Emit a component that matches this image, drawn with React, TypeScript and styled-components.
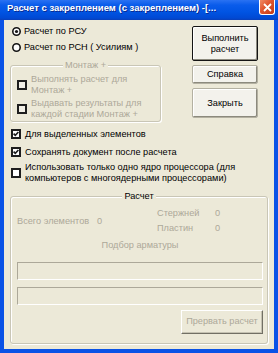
import React from 'react';
import styled, { createGlobalStyle } from 'styled-components';

// XP "Luna" look, scaled down like the screenshot
const ui = {
  face: '#ECE9D8',
  disabled: '#ACA899',
  text: '#000000',
  frame: '#0A52E6',
  etch: '#C9C6B6',
  font: '"Liberation Sans", Arial, sans-serif',
  size: '9.2px',
};

const GlobalStyle = createGlobalStyle`
  html, body {
    margin: 0;
    padding: 0;
    background: ${ui.face};
  }
  body {
    font-family: ${ui.font};
    font-size: ${ui.size};
  }
`;

const Window = styled.div`
  width: 278px;
  height: 353px;
  display: flex;
  flex-direction: column;
  overflow: hidden;
`;

const TitleBar = styled.div`
  height: 20px;
  flex: none;
  display: flex;
  align-items: flex-start;
  padding: 0 3px 0 7px;
  box-sizing: border-box;
  background: linear-gradient(to bottom, #2A72F2 0%, #0A5CEB 25%, #0054E3 60%, #0049D4 90%, #0A3FB8 100%);
`;

const Title = styled.span`
  flex: 1;
  color: #ffffff;
  font-weight: bold;
  font-size: 9.5px;
  line-height: 15px;
  white-space: nowrap;
  overflow: hidden;
  text-shadow: 1px 1px 0 #0A2A90;
`;

const CloseButton = styled.div`
  width: 16px;
  height: 15px;
  flex: none;
  box-sizing: border-box;
  border: 1px solid #ffffff;
  border-top: none;
  border-radius: 0 0 3px 3px;
  background: linear-gradient(135deg, #F08A66 0%, #E0542E 45%, #C43A16 100%);
  display: flex;
  align-items: center;
  justify-content: center;
`;

const Frame = styled.div`
  flex: 1;
  min-height: 0;
  display: flex;
  flex-direction: column;
  box-sizing: border-box;
  border: 4px solid ${ui.frame};
  border-top: none;
  padding: 3px 6px 5px;
  background: ${ui.face};
  color: ${ui.text};
`;

const TopSection = styled.div`
  display: flex;
  justify-content: space-between;
  align-items: flex-start;
`;

const LeftColumn = styled.div`
  width: 151px;
  display: flex;
  flex-direction: column;
`;

const ButtonColumn = styled.div`
  width: 66px;
  margin: 3px 10px 0 0;
  display: flex;
  flex-direction: column;
  gap: 4px;
`;

const RadioRow = styled.label`
  height: 16px;
  display: flex;
  align-items: center;
  gap: 3px;
  padding-left: 2px;
  line-height: 11px;
  white-space: nowrap;
`;

const GroupBox = styled.fieldset<{ $grow?: boolean; $top: number }>`
  margin: ${(p) => p.$top}px 0 0;
  padding: 0;
  min-width: 0;
  border: 1px solid ${ui.etch};
  border-radius: 3px;
  box-shadow: inset 1px 1px 0 #ffffff, 1px 1px 0 #ffffff;
  display: flex;
  flex-direction: column;
  flex: ${(p) => (p.$grow ? 1 : 'none')};
`;

const GroupLegend = styled.legend<{ $disabled?: boolean }>`
  margin: 0 auto;
  padding: 0 2px;
  font-size: ${ui.size};
  line-height: 10px;
  background: ${ui.face};
  color: ${(p) => (p.$disabled ? ui.disabled : ui.text)};
`;

const MountBody = styled.div`
  display: flex;
  flex-direction: column;
  gap: 3px;
  padding: 4px 4px 2px 6px;
`;

const CheckRow = styled.label<{ $disabled?: boolean }>`
  display: flex;
  align-items: center;
  gap: 4px;
  min-height: 16px;
  line-height: 10.5px;
  white-space: nowrap;
  color: ${(p) => (p.$disabled ? ui.disabled : ui.text)};
`;

const OptionList = styled.div`
  display: flex;
  flex-direction: column;
  gap: 2px;
  margin-top: 4px;
  padding-left: 1px;
`;

const BoxMark = styled.span<{ $disabled?: boolean }>`
  width: 10px;
  height: 10px;
  flex: none;
  box-sizing: border-box;
  border: 2px solid #1E1E1E;
  background: ${(p) => (p.$disabled ? '#F1EFE6' : '#ffffff')};
  display: flex;
  align-items: center;
  justify-content: center;
`;

const PushButton = styled.button<{ $height: number; $default?: boolean }>`
  height: ${(p) => p.$height}px;
  width: 100%;
  padding: 0;
  font-family: ${ui.font};
  font-size: ${ui.size};
  line-height: 11px;
  color: ${(p) => (p.disabled ? ui.disabled : ui.text)};
  background: #F3F2EC;
  border: 1px solid ${(p) => (p.$default ? '#141414' : '#B4B1A2')};
  border-radius: 2px;
  box-shadow: inset -1px -1px 0 #8C8A7E, inset 1px 1px 0 #ffffff;
  cursor: default;
`;

const CalcBody = styled.div`
  flex: 1;
  display: flex;
  flex-direction: column;
  padding: 5px 4px 0 6px;
`;

const StatsGrid = styled.div`
  display: grid;
  grid-template-columns: 80px 60px 58px 1fr;
  grid-template-rows: 15px 15px;
  align-items: center;
  color: ${ui.disabled};
  line-height: 11px;
`;

const StatCell = styled.span<{ $span?: boolean }>`
  grid-row: ${(p) => (p.$span ? '1 / span 2' : 'auto')};
  white-space: nowrap;
`;

const Caption = styled.div`
  margin-top: 4px;
  text-align: center;
  line-height: 10.5px;
  color: ${ui.disabled};
`;

const ProgressBox = styled.div<{ $top: number }>`
  height: 18px;
  margin-top: ${(p) => p.$top}px;
  box-sizing: border-box;
  border: 1px solid;
  border-color: ${ui.disabled} #ffffff #ffffff ${ui.disabled};
`;

const StopRow = styled.div`
  margin-top: 5px;
  display: flex;
  justify-content: flex-end;
`;

const StopButton = styled(PushButton)`
  width: 82px;
  background: ${ui.face};
  border-color: #ffffff #716F64 #716F64 #ffffff;
  box-shadow: inset -1px -1px 0 #C5C2B2;
  border-radius: 0;
`;

const Radio = ({ checked }: { checked?: boolean }) => (
  <svg width="9" height="9" viewBox="0 0 9 9" style={{ flex: 'none' }}>
    <circle cx="4.5" cy="4.5" r="3.7" fill="#ffffff" stroke="#151515" strokeWidth="1.6" />
    {checked && <circle cx="4.5" cy="4.5" r="1.6" fill="#151515" />}
  </svg>
);

const CheckBox = ({ checked, disabled }: { checked?: boolean; disabled?: boolean }) => (
  <BoxMark $disabled={disabled}>
    {checked && (
      <svg width="6" height="6" viewBox="0 0 6 6">
        <path d="M0.6 2.6 L2.3 4.4 L5.4 1" fill="none" stroke="#1E1E1E" strokeWidth="1.6" />
      </svg>
    )}
  </BoxMark>
);

const App = () => {
  return (
    <>
      <GlobalStyle />
      <Window>
        <TitleBar>
          <Title>Расчет с закреплением (с закреплением) -[...</Title>
          <CloseButton>
            <svg width="9" height="9" viewBox="0 0 9 9">
              <path d="M1 1 L8 8 M8 1 L1 8" stroke="#ffffff" strokeWidth="1.8" />
            </svg>
          </CloseButton>
        </TitleBar>

        <Frame>
          <TopSection>
            <LeftColumn>
              <RadioRow>
                <Radio checked />
                Расчет по РСУ
              </RadioRow>
              <RadioRow>
                <Radio />
                Расчет по РСН ( Усилиям )
              </RadioRow>

              <GroupBox $top={5}>
                <GroupLegend $disabled>Монтаж +</GroupLegend>
                <MountBody>
                  <CheckRow $disabled>
                    <CheckBox disabled />
                    <span>
                      Выполнять расчет для
                      <br />
                      Монтаж +
                    </span>
                  </CheckRow>
                  <CheckRow $disabled>
                    <CheckBox disabled />
                    <span>
                      Выдавать результаты для
                      <br />
                      каждой стадии Монтаж +
                    </span>
                  </CheckRow>
                </MountBody>
              </GroupBox>
            </LeftColumn>

            <ButtonColumn>
              <PushButton $height={35} $default>
                Выполнить
                <br />
                расчет
              </PushButton>
              <PushButton $height={19}>Справка</PushButton>
              <PushButton $height={30}>Закрыть</PushButton>
            </ButtonColumn>
          </TopSection>

          <OptionList>
            <CheckRow>
              <CheckBox checked />
              Для выделенных элементов
            </CheckRow>
            <CheckRow>
              <CheckBox checked />
              Сохранять документ после расчета
            </CheckRow>
            <CheckRow>
              <CheckBox />
              <span>
                Использовать только одно ядро процессора (для
                <br />
                компьютеров с многоядерными процессорами)
              </span>
            </CheckRow>
          </OptionList>

          <GroupBox $top={8} $grow>
            <GroupLegend>Расчет</GroupLegend>
            <CalcBody>
              <StatsGrid>
                <StatCell $span>Всего элементов</StatCell>
                <StatCell $span>0</StatCell>
                <StatCell>Стержней</StatCell>
                <StatCell>0</StatCell>
                <StatCell>Пластин</StatCell>
                <StatCell>0</StatCell>
              </StatsGrid>
              <Caption>Подбор арматуры</Caption>
              <ProgressBox $top={11} />
              <ProgressBox $top={7} />
              <StopRow>
                <StopButton $height={24} disabled>
                  Прервать расчет
                </StopButton>
              </StopRow>
            </CalcBody>
          </GroupBox>
        </Frame>
      </Window>
    </>
  );
};

export default App;
